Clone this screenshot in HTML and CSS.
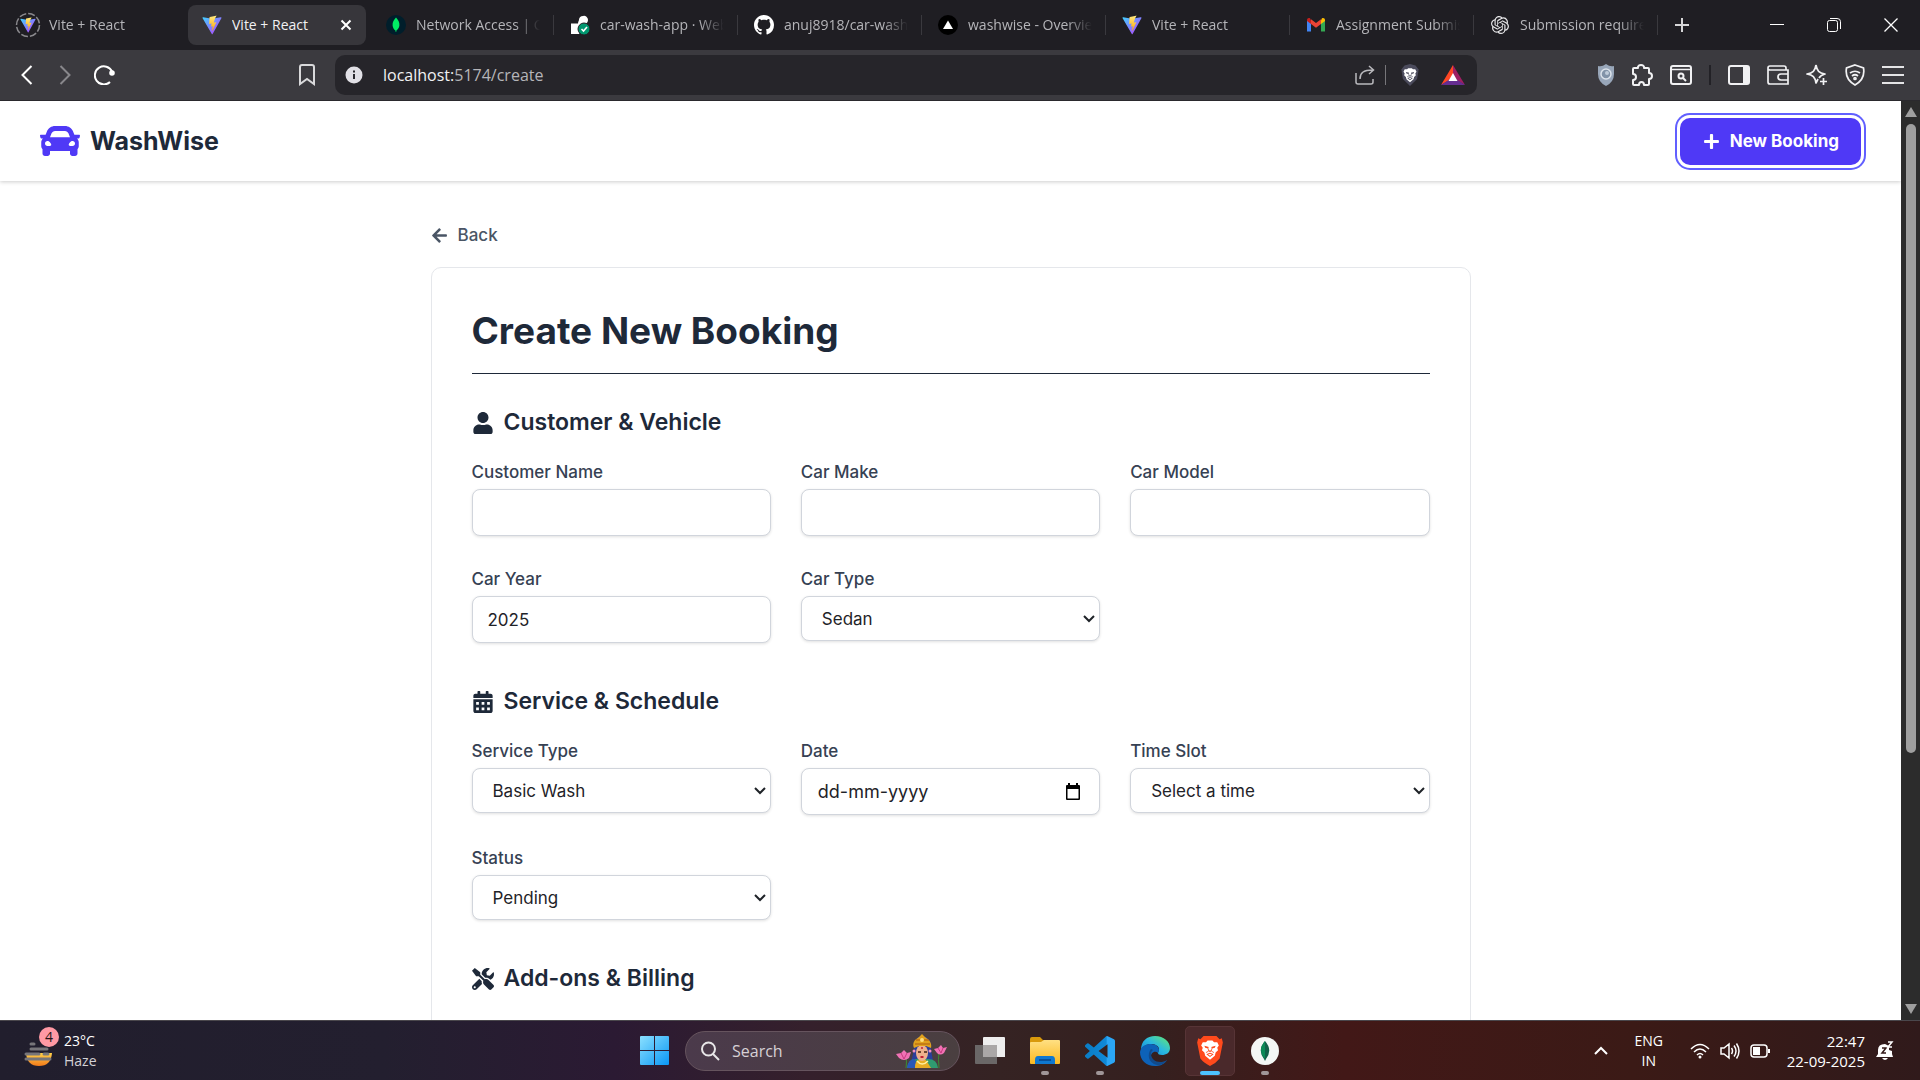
FILE: index.html
```html
<!DOCTYPE html>
<html lang="en">
<head>
<meta charset="utf-8">
<title>Vite + React</title>
<link rel="stylesheet" href="styles.css">
</head>
<body>
<svg class="defs" aria-hidden="true">
  <defs>
    <linearGradient id="vite-a" x1="0" y1="0" x2="1" y2="1"><stop offset="0" stop-color="#41d1ff"/><stop offset="1" stop-color="#bd34fe"/></linearGradient>
    <linearGradient id="vite-b" x1="0" y1="0" x2="0" y2="1"><stop offset="0" stop-color="#ffea83"/><stop offset="1" stop-color="#ffa800"/></linearGradient>
    <linearGradient id="win" x1="0" y1="0" x2="1" y2="1"><stop offset="0" stop-color="#8be0ff"/><stop offset="1" stop-color="#0a97f5"/></linearGradient>
    <linearGradient id="folder" x1="0" y1="0" x2="0" y2="1"><stop offset="0" stop-color="#ffe083"/><stop offset="1" stop-color="#fbb921"/></linearGradient>
    <linearGradient id="edge-a" x1="0" y1="1" x2="1" y2="0"><stop offset="0" stop-color="#1184d8"/><stop offset=".5" stop-color="#2ab8e0"/><stop offset="1" stop-color="#66eb6e"/></linearGradient>
    <linearGradient id="code" x1="0" y1="0" x2="1" y2="0"><stop offset="0" stop-color="#0a7cc4"/><stop offset=".7" stop-color="#1089d8"/><stop offset=".75" stop-color="#2ba6f5"/><stop offset="1" stop-color="#2ba6f5"/></linearGradient>
    <linearGradient id="sun" x1="0" y1="0" x2="0" y2="1"><stop offset="0" stop-color="#ffd24a"/><stop offset="1" stop-color="#f27a1a"/></linearGradient>
    <symbol id="vite" viewBox="0 0 32 32">
      <path fill="url(#vite-a)" d="M31 5 17 30.500c-.3.500-1 .500-1.300 0L1 5c-.4-.7.200-1.400.9-1.300L16 6l14-2.300c.8-.1 1.400.6 1 1.300z"/>
      <path fill="url(#vite-b)" d="m22.500 1-10 2c-.2 0-.4.200-.4.400l-.7 10.500c0 .3.300.500.500.4l2.900-.7c.3-.1.500.200.500.500L14.500 18c-.1.300.2.500.5.500l1.700-.6c.300-.1.600.2.500.5l-1.300 6.500c-.1.400.4.600.7.3L22.800 12c.2-.3-.1-.6-.4-.500l-3 .500c-.3.100-.5-.2-.4-.500L21 5l2-3.600c0-.3-.2-.5-.5-.4z"/>
    </symbol>
    <symbol id="lion" viewBox="0 0 24 28">
      <path d="m3 5 4 0 2-2h6l2 2h4l2 4-2 3 1 3-3 3-1 4-6 5-6-5-1-4-3-3 1-3-2-3z"/>
      <path class="lion-mark" d="m5 9.500 5.500 1.500-1 2-3.500-1zM19 9.500 13.500 11l1 2 3.500-1zM10 15.500h4l-2 2.500zM7.500 20l3.500-1.500h2l3.500 1.500-4.500 3.500z"/>
      <path class="lion-line" d="M9.500 12.500 10.500 16 7 18M14.500 12.500 13.500 16l3.500 2"/>
      <path d="m9.500 20.500 2.500-1 2.500 1-2.500 1.500z"/>
    </symbol>
  </defs>
</svg>

<header class="tabs">
  <a class="tab tab-first" href="#"><svg class="fav fav-ring" viewBox="0 0 26 26"><circle cx="13" cy="13" r="11.500" fill="none" stroke="#8a898d" stroke-width="1.500" stroke-dasharray="7 2"/><use href="#vite" x="5" y="5" width="16" height="16"/></svg><span class="tab-text">Vite + React</span></a>
  <a class="tab tab-active" href="#"><svg class="fav"><use href="#vite"/></svg><span class="tab-text">Vite + React</span><svg class="tab-close" viewBox="0 0 12 12"><path d="m1.500 1.500 9 9m0-9-9 9" stroke="#fff" stroke-width="2"/></svg></a>
  <a class="tab tab-sep" href="#"><svg class="fav" viewBox="0 0 20 20"><circle cx="10" cy="10" r="10" fill="#001e2b"/><path d="M10 2.500c2 2.200 3.700 4.700 3.400 7.800-.2 2.400-1.400 4-3 5.300L10.200 17h-.5l-.2-1.400c-1.500-1.300-2.700-2.900-2.900-5.200C6.300 7.200 8 4.700 10 2.500z" fill="#00ed64"/></svg><span class="tab-text">Network Access | Cloud</span></a>
  <a class="tab tab-sep" href="#"><svg class="fav" viewBox="0 0 20 20"><path d="M1 19V8.500h7c0-2 1-2.500 1-4A4 4 0 0 1 13 1a4 4 0 0 1 5 4c0 3-3 4-4 5L9 19z" fill="#fff"/><circle cx="14" cy="14" r="6" fill="#00966f" stroke="#1f1e23"/><path d="m11.500 14 2 2 3.500-4" fill="none" stroke="#fff" stroke-width="1.600"/></svg><span class="tab-text">car-wash-app · Web Service</span></a>
  <a class="tab tab-sep" href="#"><svg class="fav" viewBox="0 0 16 16"><path fill="#fff" d="M8 0C3.580 0 0 3.580 0 8c0 3.540 2.290 6.530 5.470 7.590.4.070.55-.17.55-.38 0-.19-.01-.82-.01-1.490-2.010.37-2.530-.49-2.690-.94-.09-.23-.48-.94-.82-1.130-.28-.15-.68-.52-.01-.53.63-.01 1.080.58 1.230.82.72 1.210 1.870.87 2.330.66.07-.52.28-.87.51-1.070-1.780-.2-3.640-.89-3.640-3.950 0-.87.31-1.590.82-2.150-.08-.2-.36-1.020.08-2.120 0 0 .67-.21 2.200.82.64-.18 1.320-.27 2-.27s1.360.09 2 .27c1.530-1.040 2.200-.82 2.200-.82.44 1.100.16 1.920.08 2.120.51.56.82 1.270.82 2.150 0 3.070-1.870 3.750-3.650 3.950.29.25.54.73.54 1.480 0 1.070-.01 1.930-.01 2.200 0 .21.15.46.55.38A8.010 8.010 0 0 0 16 8c0-4.420-3.580-8-8-8z"/></svg><span class="tab-text">anuj8918/car-wash-app</span></a>
  <a class="tab tab-sep" href="#"><svg class="fav" viewBox="0 0 20 20"><circle cx="10" cy="10" r="10"/><path d="m10 5.500 5 8.500H5z" fill="#fff"/></svg><span class="tab-text">washwise - Overview</span></a>
  <a class="tab tab-sep" href="#"><svg class="fav"><use href="#vite"/></svg><span class="tab-text">Vite + React</span></a>
  <a class="tab tab-sep" href="#"><svg class="fav" viewBox="0 0 20 20"><path d="M1 5v11.500h4V8z" fill="#4285f4"/><path d="M19 5v11.500h-4V8z" fill="#34a853"/><path d="M15 5.500V9l4-3V5c0-2-2-2.500-3.200-1.600z" fill="#fbbc04"/><path d="M5 5.500V9L1 6V5c0-2 2-2.500 3.200-1.600z" fill="#c5221f"/><path d="M5 4.200 10 8l5-3.800V9l-5 3.800L5 9z" fill="#ea4335"/></svg><span class="tab-text">Assignment Submission</span></a>
  <a class="tab tab-sep" href="#"><svg class="fav fav-small" viewBox="0 0 24 24"><path fill="#e6e6e8" d="M22.282 9.821a5.985 5.985 0 0 0-.516-4.911 6.046 6.046 0 0 0-6.510-2.900A6.065 6.065 0 0 0 4.981 4.182a5.985 5.985 0 0 0-3.998 2.900 6.046 6.046 0 0 0 .743 7.097 5.980 5.980 0 0 0 .511 4.911 6.051 6.051 0 0 0 6.515 2.900A5.985 5.985 0 0 0 13.260 24a6.056 6.056 0 0 0 5.772-4.206 5.990 5.990 0 0 0 3.998-2.900 6.056 6.056 0 0 0-.748-7.073zM13.260 22.430a4.476 4.476 0 0 1-2.876-1.040l.141-.081 4.779-2.758a.795.795 0 0 0 .393-.681v-6.737l2.020 1.169a.071.071 0 0 1 .038.052v5.583a4.504 4.504 0 0 1-4.495 4.493zM3.600 18.304a4.471 4.471 0 0 1-.535-3.014l.142.085 4.783 2.759a.771.771 0 0 0 .781 0l5.843-3.369v2.333a.080.080 0 0 1-.033.062L9.740 19.950a4.500 4.500 0 0 1-6.140-1.646zM2.341 7.896a4.485 4.485 0 0 1 2.366-1.973V11.600a.766.766 0 0 0 .388.677l5.815 3.355-2.020 1.168a.076.076 0 0 1-.071 0l-4.830-2.786A4.504 4.504 0 0 1 2.341 7.872zm16.596 3.856-5.833-3.388L15.119 7.200a.076.076 0 0 1 .071 0l4.830 2.791a4.494 4.494 0 0 1-.676 8.105v-5.678a.790.790 0 0 0-.407-.667zm2.011-3.023-.142-.085-4.774-2.782a.776.776 0 0 0-.785 0L9.409 9.230V6.897a.066.066 0 0 1 .028-.061l4.830-2.787a4.499 4.499 0 0 1 6.681 4.660zM8.307 12.863l-2.020-1.164a.080.080 0 0 1-.038-.057V6.075a4.499 4.499 0 0 1 7.375-3.454l-.142.081L8.704 5.460a.795.795 0 0 0-.393.681zm1.097-2.365 2.602-1.500 2.607 1.500v2.999l-2.597 1.500-2.607-1.500z"/></svg><span class="tab-text">Submission requirements</span></a>
  <button class="bare new-tab" aria-label="New tab"><svg width="16" height="16" viewBox="0 0 16 16"><path d="M8 1v14M1 8h14" stroke="#d6d6d8" stroke-width="2"/></svg></button>
  <div class="window-controls">
    <button class="bare" aria-label="Minimize"><svg width="14" height="14"><path d="M0 6.500h14" stroke="#fff"/></svg></button>
    <button class="bare" aria-label="Restore"><svg width="14" height="14" fill="none" stroke="#fff"><rect x=".5" y="2.500" width="10" height="11" rx="2"/><path d="M3 .5h7q3.500 0 3.500 3V11"/></svg></button>
    <button class="bare" aria-label="Close"><svg width="14" height="14"><path d="m.5.500 13 13m0-13-13 13" stroke="#fff" stroke-width="1.300"/></svg></button>
  </div>
</header>

<nav class="toolbar" aria-label="Browser">
  <div class="nav-buttons">
    <button class="bare" aria-label="Back"><svg width="18" height="20" fill="none" stroke="#fff" stroke-width="2"><path d="m13.500 1-9 9 9 9"/></svg></button>
    <button class="bare" aria-label="Forward"><svg width="18" height="20" fill="none" stroke="#88878b" stroke-width="2"><path d="m4.500 1 9 9-9 9"/></svg></button>
    <button class="bare" aria-label="Reload"><svg width="22" height="20" fill="none" stroke="#fff" stroke-width="2"><path d="M16 17A9 9 0 1 1 18 6.500"/><circle cx="18" cy="8" r="1.800" fill="#fff"/></svg></button>
  </div>
  <button class="bare bookmark" aria-label="Bookmark"><svg width="16" height="22" fill="none" stroke="#d9d9db" stroke-width="2"><path d="M1 3q0-2 2-2h10q2 0 2 2v17l-7-5-7 5z"/></svg></button>
  <div class="address">
    <svg width="18" height="18"><circle cx="9" cy="9" r="8.500" fill="#e1e0e6"/><path d="M8 8h2v5H8zM8 4.500h2v2H8z" fill="#29282d"/></svg>
    <span class="url">localhost:<span class="path">5174/create</span></span>
    <svg width="20" height="20" fill="none" stroke="#b9b9bd" stroke-width="1.500"><path d="M1 8v9q0 2 2 2h13q2 0 2-2v-3M5 14c0-6 3-9 13-9M14 1l4.500 4L14 9"/></svg>
    <span class="bar bar-light"></span>
    <svg class="lion lion-small" width="20" height="22" viewBox="0 0 24 28"><path class="lion-bg" d="M5 2 12 0l7 2 4 5-2 12-9 9-9-9L1 7z"/><use href="#lion" x="3" y="3" width="18" height="21"/></svg>
    <svg width="24" height="20"><path d="M12 0 0 20l12-7z" fill="#ff4724"/><path d="m12 0 12 20-12-7z" fill="#9e1f63"/><path d="M0 20h24l-12-8z" fill="#662d91"/><path d="m12 8 4.500 8h-9z" fill="#fff"/></svg>
  </div>
  <div class="extensions">
    <svg width="16" height="22"><path d="M8 0q4 3 8 2v8q0 8-8 12-8-4-8-12V2q4 1 8-2z" fill="#98a6b9"/><circle cx="8" cy="10" r="5" fill="#8293a8" stroke="#dce3eb" stroke-width="1.500"/><circle cx="9" cy="9" r="2" fill="#bfcbd9"/></svg>
    <svg width="22" height="22" fill="none" stroke="#f1f1f3" stroke-width="2" stroke-linejoin="round"><path d="M2 5q0-1 1-1h4c-1-4 7-4 6 0h4q1 0 1 1v4c4 0 4 6 0 6v5q0 1-1 1h-4c0-4-5-4-5 0H3q-1 0-1-1v-4c4 0 4-6 0-6z"/></svg>
    <svg width="22" height="20" fill="none" stroke="#f1f1f3" stroke-width="2"><rect x="1" y="1" width="20" height="18" rx="2"/><path d="M1 4.500h20" stroke-width="1.500"/><circle cx="11" cy="11" r="2.500"/><path d="m13 13 3 3"/></svg>
    <span class="bar"></span>
    <svg width="22" height="20"><rect x="1" y="1" width="20" height="18" rx="2" fill="none" stroke="#f1f1f3" stroke-width="2"/><path d="M15 1h6v18h-6z" fill="#f1f1f3"/></svg>
    <svg width="22" height="20" fill="none" stroke="#f1f1f3" stroke-width="2"><path d="M3 1h14q2 0 2 2v2h2v14H3q-2 0-2-2V3q0-2 2-2zM1 4q1 1 2 1h16M21 9h-7q-3 0-3 3t3 3h7" stroke-width="1.700"/></svg>
    <svg width="22" height="22" fill="none" stroke="#f1f1f3" stroke-width="1.700" stroke-linejoin="round"><path d="M10 1c1 6 3 8 9 9-4 1-5 2-6 4M10 1c-1 6-3 8-9 9 6 1 8 3 9 9l2-4M17.500 14v7M14 17.500h7"/></svg>
    <svg width="20" height="22" fill="none" stroke="#f1f1f3" stroke-width="1.700"><path d="m10 1 8.500 3q2 11-8.500 17Q-.5 15 1.500 4zM5 9q5-3.500 10 0M7 12q3-2.500 6 0"/><circle cx="10" cy="14.500" r="1"/></svg>
    <svg width="22" height="18"><path d="M0 1h22M0 9h22M0 17h22" stroke="#e4e4e6" stroke-width="2"/></svg>
  </div>
</nav>

<div class="viewport">
  <div class="page">
    <header class="site-header">
      <a class="brand" href="#"><svg class="brand-icon" viewBox="0 0 512 512"><path d="M499.990 176h-59.870l-16.640-41.600C406.380 91.630 365.570 64 319.500 64h-127c-46.060 0-86.880 27.630-103.990 70.400L71.870 176H12.010C4.200 176-1.530 183.340.37 190.910l6 24C7.700 220.250 12.500 224 18.010 224h20.070C24.650 235.730 16 252.780 16 272v48c0 16.120 6.160 30.670 16 41.930V416c0 17.670 14.330 32 32 32h32c17.670 0 32-14.330 32-32v-32h256v32c0 17.670 14.330 32 32 32h32c17.670 0 32-14.330 32-32v-54.070c9.840-11.250 16-25.800 16-41.930v-48c0-19.220-8.650-36.270-22.070-48H494c5.510 0 10.310-3.750 11.640-9.090l6-24c1.890-7.570-3.840-14.910-11.650-14.910zm-352.060-17.830c7.290-18.220 24.940-30.170 44.570-30.170h127c19.630 0 37.280 11.950 44.570 30.170L384 208H128l19.930-49.830zM96 319.800c-19.200 0-32-12.760-32-31.900S76.800 256 96 256s48 28.710 48 47.850-28.800 15.950-48 15.950zm320 0c-19.200 0-48 3.190-48-15.950S396.800 256 416 256s32 12.760 32 31.900-12.800 31.900-32 31.900z"/></svg>WashWise</a>
      <button class="primary"><svg class="icon-sm" viewBox="0 0 448 512"><path d="M416 208H272V64c0-17.670-14.330-32-32-32h-32c-17.670 0-32 14.330-32 32v144H32c-17.670 0-32 14.330-32 32v32c0 17.670 14.330 32 32 32h144v144c0 17.670 14.330 32 32 32h32c17.670 0 32-14.330 32-32V304h144c17.670 0 32-14.330 32-32v-32c0-17.670-14.330-32-32-32z"/></svg>New Booking</button>
    </header>
    <main class="content">
      <a class="back" href="#"><svg class="icon-sm" viewBox="0 0 448 512"><path d="M257.500 445.100l-22.200 22.200c-9.400 9.400-24.600 9.400-33.900 0L7 273c-9.400-9.400-9.400-24.600 0-33.900L201.400 44.700c9.400-9.400 24.600-9.400 33.900 0l22.200 22.200c9.500 9.500 9.300 25-.4 34.300L136.600 216H424c13.300 0 24 10.700 24 24v32c0 13.300-10.700 24-24 24H136.600l120.500 114.800c9.800 9.300 10 24.800.4 34.300z"/></svg>Back</a>
      <form class="card">
        <h1 class="title">Create New Booking</h1>
        <section class="group">
          <h2 class="heading"><svg class="icon-md" viewBox="0 0 448 512"><path d="M224 256c70.700 0 128-57.300 128-128S294.700 0 224 0 96 57.300 96 128s57.300 128 128 128zm89.600 32h-16.700c-22.200 10.200-46.900 16-72.900 16s-50.600-5.800-72.900-16h-16.700C60.200 288 0 348.200 0 422.400V464c0 26.500 21.500 48 48 48h352c26.500 0 48-21.500 48-48v-41.600c0-74.200-60.200-134.400-134.400-134.400z"/></svg>Customer &amp; Vehicle</h2>
          <div class="fields">
            <div class="field"><label for="name">Customer Name</label><input class="control" id="name" type="text"></div>
            <div class="field"><label for="make">Car Make</label><input class="control" id="make" type="text"></div>
            <div class="field"><label for="model">Car Model</label><input class="control" id="model" type="text"></div>
            <div class="field"><label for="year">Car Year</label><input class="control" id="year" type="text" inputmode="numeric" value="2025"></div>
            <div class="field"><label for="type">Car Type</label><select class="control select" id="type"><option>Sedan</option></select></div>
          </div>
        </section>
        <section class="group">
          <h2 class="heading"><svg class="icon-md" viewBox="0 0 448 512"><path fill-rule="evenodd" d="M0 464c0 26.500 21.500 48 48 48h352c26.500 0 48-21.500 48-48V192H0zM64 256h64v64H64zm128 0h64v64h-64zm128 0h64v64h-64zM64 384h64v64H64zm128 0h64v64h-64zm128 0h64v64h-64zM400 64h-48V16c0-8.800-7.200-16-16-16h-32c-8.800 0-16 7.200-16 16v48H160V16c0-8.800-7.200-16-16-16h-32c-8.800 0-16 7.200-16 16v48H48C21.500 64 0 85.500 0 112v48h448v-48c0-26.500-21.500-48-48-48z"/></svg>Service &amp; Schedule</h2>
          <div class="fields">
            <div class="field"><label for="service">Service Type</label><select class="control select" id="service"><option>Basic Wash</option></select></div>
            <div class="field"><label for="date">Date</label><div class="control date"><input class="date-input" id="date" type="text" value="dd-mm-yyyy"><button class="bare" type="button" aria-label="Open calendar"><svg width="16" height="18"><path fill="#000" fill-rule="evenodd" d="M3 0h2v2h6V0h2v2h1q1 0 1 1v13q0 1-1 1H2q-1 0-1-1V3q0-1 1-1h1zM2.500 6v9.500h11V6z"/></svg></button></div></div>
            <div class="field"><label for="slot">Time Slot</label><select class="control select" id="slot"><option>Select a time</option></select></div>
            <div class="field"><label for="status">Status</label><select class="control select" id="status"><option>Pending</option></select></div>
          </div>
        </section>
        <section class="group">
          <h2 class="heading"><svg class="icon-md" viewBox="0 0 512 512"><path d="M501.100 395.700L384 278.600c-23.100-23.100-57.600-27.600-85.400-13.900L192 158.100V96L64 0 0 64l96 128h62.100l106.600 106.600c-13.600 27.800-9.200 62.300 13.900 85.400l117.100 117.100c14.600 14.600 38.200 14.600 52.700 0l52.700-52.700c14.500-14.600 14.500-38.200 0-52.700zM331.700 225c28.300 0 54.900 11 74.900 31l19.400 19.400c15.800-6.900 30.800-16.500 43.800-29.500 37.100-37.100 49.700-89.300 37.900-136.700-2.200-9-13.500-12.100-20.100-5.500l-74.400 74.400-67.900-11.300L334 98.900l74.400-74.400c6.600-6.600 3.400-17.900-5.700-20.200-47.400-11.700-99.600.9-136.600 37.900-28.500 28.500-41.900 66.100-41.200 103.600l82.100 82.100c8.100-1.900 16.500-2.900 24.700-2.900zm-103.900 82l-56.700-56.700L18.700 402.800c-25 25-25 65.500 0 90.500s65.500 25 90.500 0l123.600-123.600c-7.600-19.900-9.900-41.600-5-62.700zM64 472c-13.200 0-24-10.800-24-24 0-13.300 10.700-24 24-24s24 10.700 24 24c0 13.200-10.700 24-24 24z"/></svg>Add-ons &amp; Billing</h2>
        </section>
      </form>
    </main>
  </div>
  <div class="scrollbar">
    <svg width="12" height="10"><path d="m6 0 6 10H0z"/></svg>
    <div class="track"><div class="thumb"></div></div>
    <svg width="12" height="10"><path d="m6 10 6-10H0z"/></svg>
  </div>
</div>

<footer class="taskbar">
  <div class="weather">
    <div class="weather-icon">
      <svg width="30" height="26"><path d="M2 12h26q-1 13-13 13T2 12z" fill="url(#sun)"/><path d="M7 3h3M7 8h16M2 13h13M20 13h4M2 18h24" stroke="#77757a" stroke-width="3" stroke-linecap="round"/></svg>
      <span class="badge">4</span>
    </div>
    <div class="weather-text"><span>23°C</span><span class="dim">Haze</span></div>
  </div>
  <div class="apps">
    <button class="bare app" aria-label="Start"><svg width="30" height="30"><path fill="url(#win)" d="M0 1q0-1 1-1h13v14H0zM15 0h13q1 0 1 1v13H15zM0 15h14v14H1q-1 0-1-1zM15 15h14v13q0 1-1 1H15z"/></svg></button>
    <label class="search">
      <svg width="20" height="20" fill="none" stroke="#e8e6e8" stroke-width="2"><circle cx="8.500" cy="8" r="6.500"/><path d="m13 13 6 6"/></svg>
      <input class="search-input" type="text" placeholder="Search">
      <svg width="52" height="34" viewBox="0 0 52 34">
        <path d="M10 22q1 6 0 12M43 17q-1 8 0 17" fill="none" stroke="#3d8c32"/>
        <path d="m0 20 5-1 3-3 3 3 4-1-2 6q-5 4-10 0zM38 15l4-1 3-3 2 3 4-1-3 6q-4 3-7 0z" fill="#f172b5"/>
        <path d="m5 19 3 6 3-6M42 14l3 5 2-5" fill="none" stroke="#c9387f"/>
        <path d="M18 16q-1-13 8-14 10 1 9 14l3 16H14z" fill="#2b3f9a"/>
        <path d="M11 34q1-9 9-9h12q9 0 10 9z" fill="#2f9a70"/><path d="M11 34q1-9 8-9l3 9z" fill="#2858b8"/><path d="M19 34q0-8 4-8h7l5 8z" fill="#e8ad25"/>
        <ellipse cx="26" cy="19" rx="6" ry="8" fill="#eeb18c"/>
        <path d="M18 14q-2-4 1-8l4-3 3-3 3 3 4 3q3 4 2 8l-5-2h-7z" fill="#e0a11d"/><path d="M20 6h13M19 10h15" stroke="#ad5a10"/><circle cx="26" cy="6" r="2" fill="#ffe07a"/>
        <path d="M22 18h3m3 0h3" stroke="#452316" stroke-width="1.500"/><path d="M24.500 23h3" stroke="#c21f35" stroke-width="2"/><circle cx="26" cy="14" r="1" fill="#c21f35"/>
        <circle cx="18" cy="17" r="1.500" fill="#f291c2"/><circle cx="34" cy="17" r="1.500" fill="#f291c2"/>
        <path d="M21 27q5 6 11 0" fill="none" stroke="#fff0a0" stroke-width="1.500"/>
      </svg>
    </label>
    <button class="bare app" aria-label="Task view"><svg width="30" height="28"><path d="M8 1q0-1 1-1h20q1 0 1 1v19H8z" fill="#eee"/><path d="M0 8h22v19H1q-1 0-1-1z" fill="#6a6767"/><path d="M8 8h14v12H8z" fill="#aaa7a7"/></svg></button>
    <button class="bare app open" aria-label="File Explorer"><svg width="30" height="28"><path d="M0 2q0-2 2-2h8l3 3h14v6H0z" fill="#d99a0c"/><path d="M0 6q0-1 1-1h10l3-2h15q1 0 1 1v22q0 1-1 1H1q-1 0-1-1z" fill="url(#folder)"/><path d="M5 27v-4q0-4 3-4h14q3 0 3 4v4z" fill="#0f78d0"/><path d="M9 23h12" stroke="#07519b" stroke-width="2"/></svg></button>
    <button class="bare app open" aria-label="Visual Studio Code"><svg width="30" height="30" viewBox="0 0 24 24"><path fill="url(#code)" d="M23.150 2.587L18.210.21a1.494 1.494 0 0 0-1.705.29l-9.460 8.630-4.120-3.128a.999.999 0 0 0-1.276.057L.327 7.261A1 1 0 0 0 .326 8.740L3.899 12 .326 15.260a1 1 0 0 0 .001 1.479L1.650 17.940a.999.999 0 0 0 1.276.057l4.120-3.128 9.460 8.630a1.492 1.492 0 0 0 1.704.29l4.942-2.377A1.500 1.500 0 0 0 24 20.060V3.939a1.500 1.500 0 0 0-.85-1.352zm-5.146 14.861L10.826 12l7.178-5.448v10.896z"/></svg></button>
    <button class="bare app" aria-label="Edge"><svg width="30" height="30"><path d="M1 14C1 5 7 0 15 0c9 0 15 6 15 12 0 5-4 7-8 7-3 0-4-1-4-2s1-2 1-4c0-3-4-5-8-5S3 10 1 14z" fill="url(#edge-a)"/><path d="M0 16C1 10 6 8 11 8c5 0 8 3 8 6 0 1-1 2-1 3-3-3-8 0-7 5 1 4 6 6 10 5 2 0 4-1 6-3-3 5-8 6-12 6C6 30 0 24 0 16z" fill="#0d62b8"/><path d="M11 13c-4 5-3 14 6 16 5 0 8-2 10-5-8 5-16 0-16-6 0-3 2-4 2-4z" fill="#114a8b"/></svg></button>
    <button class="bare app open active" aria-label="Brave"><svg class="lion" width="26" height="30" viewBox="0 0 24 28"><path class="lion-bg" d="M6 0h12l3 3 2-1 1 4-3 15q-3 4-9 7-6-3-9-7L0 6l1-4 2 1z"/><use href="#lion" x="3" y="2" width="18" height="21"/></svg></button>
    <button class="bare app open" aria-label="MongoDB Compass"><svg width="28" height="28"><circle cx="14" cy="14" r="14" fill="#f4f7f5"/><path d="M14 4q8 9 1 18l-1 2-1-2Q6 13 14 4z" fill="#116149"/><path d="M14 4q-8 9 0 18z" fill="#0b8a57"/></svg></button>
  </div>
  <div class="tray">
    <svg width="14" height="9" fill="none" stroke="#fff" stroke-width="2"><path d="m1 8 6-6 6 6"/></svg>
    <div class="lang"><span>ENG</span><span>IN</span></div>
    <div class="status-icons">
      <svg width="20" height="16" fill="none" stroke="#fff" stroke-width="1.500"><path d="M1 6q9-9 18 0M4 9q6-6 12 0M7 12q3-3 6 0"/><circle cx="10" cy="14" r="1.500" fill="#fff" stroke="none"/></svg>
      <svg width="20" height="18" fill="none" stroke="#fff" stroke-width="1.500"><path d="M1 6h3l5-4v14l-5-4H1zM11.500 6q2 3 0 6M14 3.500q4 5.500 0 11M16.500 1.500q5 7.500 0 15"/></svg>
      <svg width="20" height="14"><rect x="1" y="1" width="16" height="12" rx="3" fill="none" stroke="#fff" stroke-width="1.500"/><path d="M3 3h7v8H3zM18 5h2v4h-2z" fill="#fff"/></svg>
    </div>
    <div class="clock"><span>22:47</span><span>22-09-2025</span></div>
    <svg width="18" height="20"><path d="M0 16 2 13V9q0-6 7-6l4 2v4l3 1v3l1 3zM6 17h6q-3 4-6 0z" fill="#fff"/><path d="M6 7h4l-4 5h4" fill="none" stroke="#341a19" stroke-width="1.500"/><path d="M12 1h4l-4 5h4" fill="none" stroke="#fff" stroke-width="1.500"/></svg>
  </div>
</footer>
</body>
</html>
```
FILE: styles.css
```css
*, *::before, *::after { box-sizing: border-box; }

body {
  margin: 0;
  height: 100vh;
  display: flex;
  flex-direction: column;
  overflow: hidden;
  font-family: "Open Sans", "Noto Sans", sans-serif;
  font-size: 14px;
  color: #fff;
}

svg { display: block; flex: none; }
a { color: inherit; text-decoration: none; }
input, select, button { font: inherit; color: inherit; }
.bare { border: 0; padding: 0; background: none; display: flex; align-items: center; justify-content: center; }
.defs { position: absolute; width: 0; height: 0; }

/* Tab strip */
.tabs { display: flex; align-items: center; height: 50px; flex: none; padding-left: 2px; background: #1f1e23; color: #b5b5b9; }
.tab { display: flex; align-items: center; gap: 10px; flex: 0 1 184px; min-width: 0; height: 40px; padding: 0 14px 0 16px; line-height: 18px; }
.tab-first { gap: 8px; padding-left: 13px; }
.tab-active { flex-basis: 178px; margin: 0 4px 0 2px; padding: 0 14px; border-radius: 8px; background: #37363b; color: #f1f1f3; }
.tab-sep { background: linear-gradient(#3a393e, #3a393e) right center / 1px 20px no-repeat; }
.fav { width: 20px; height: 20px; }
.fav-small { width: 18px; height: 18px; margin: 0 1px; }
.fav-ring { width: 26px; height: 26px; }
.tab-text { flex: 1; min-width: 0; overflow: hidden; white-space: nowrap; -webkit-mask-image: linear-gradient(90deg, #000 80%, transparent); mask-image: linear-gradient(90deg, #000 80%, transparent); }
.tab-active .tab-text { -webkit-mask-image: none; mask-image: none; }
.tab-close { width: 12px; height: 12px; }
.new-tab { width: 48px; }
.window-controls { display: flex; gap: 43px; margin-left: auto; padding-right: 22px; }

/* Toolbar */
.toolbar { display: flex; align-items: center; height: 51px; flex: none; padding: 0 16px 0 18px; border-bottom: 1px solid #2a292d; background: #3b3a3f; }
.nav-buttons { display: flex; gap: 20px; }
.bookmark { margin-left: auto; }
.address { display: flex; align-items: center; flex: 0 1 1142px; height: 40px; margin-left: 20px; padding: 0 12px 0 10px; border-radius: 10px; background: #26252a; }
.url { flex: 1; margin-left: 20px; font-size: 16px; color: #f1f1f3; }
.path { color: #b5b5b9; }
.bar { width: 2px; height: 20px; background: #222126; }
.bar-light { width: 1px; margin: 0 14px 0 10px; background: #77767a; }
.lion-small { margin-right: 21px; }
.lion { --lion: #ff4a1c; fill: #fff; }
.lion-bg { fill: var(--lion); }
.lion-mark { fill: var(--lion); }
.lion-line { fill: none; stroke: var(--lion); stroke-width: 1px; }
.lion-small { --lion: #4b4b5c; }
.extensions { display: flex; align-items: center; gap: 17px; margin-left: 121px; }

/* Page viewport */
.viewport { display: flex; flex: 1; min-height: 0; background: #fff; }
.page { flex: 1; min-width: 0; overflow: hidden; font-family: Inter, "Liberation Sans", sans-serif; font-size: 17px; line-height: 25px; color: #1e2939; }
.site-header { display: flex; align-items: center; justify-content: space-between; height: 80px; padding: 0 40px; box-shadow: 0 1px 4px rgba(0, 0, 0, .2); }
.brand { display: flex; align-items: center; gap: 10px; font-size: 25px; font-weight: 700; }
.brand-icon { width: 40px; height: 40px; fill: #4f39f6; }
.primary { display: flex; align-items: center; gap: 10px; height: 47px; padding: 1px 22px 0 23px; border: 0; border-radius: 10px; background: #4f39f6; color: #fff; font-weight: 700; box-shadow: 0 0 0 3px #fff, 0 0 0 5px #615fff; }
.icon-sm { width: 17px; height: 17px; fill: currentColor; }
.content { max-width: 1040px; margin: 0 auto; padding-top: 41px; }
.back { display: flex; align-items: center; gap: 10px; width: max-content; margin-bottom: 18px; line-height: 27px; color: #4a5565; font-weight: 500; }
.card { padding: 40px; border: 1px solid #e5e7eb; border-radius: 10px; background: #fff; }
.title { margin: 0 0 30px; padding-bottom: 20px; border-bottom: 1px solid #1e2939; font-size: 37px; line-height: 45px; font-weight: 700; }
.group { margin-bottom: 40px; }
.heading { display: flex; align-items: center; gap: 10px; margin: 0 0 18px; font-size: 23px; line-height: 37px; font-weight: 600; }
.icon-md { width: 22px; height: 22px; fill: currentColor; }
.fields { display: grid; grid-template-columns: repeat(3, 1fr); gap: 30px; align-items: start; }
.field { display: flex; flex-direction: column; gap: 3px; min-width: 0; }
.field label { line-height: 27px; color: #364153; font-weight: 500; }
.control { width: 100%; height: 47px; padding: 0 15px; border: 1px solid #d1d5dc; border-radius: 8px; background: #fff; color: #1f2328; box-shadow: 0 1px 3px rgba(0, 0, 0, .12); }
.select { height: 45px; padding: 2px 20px 0; appearance: none; background: #fff url("data:image/svg+xml,%3Csvg xmlns='http://www.w3.org/2000/svg' width='12' height='8'%3E%3Cpath d='m1 1 5 5 5-5' fill='none' stroke='%231f2328' stroke-width='2'/%3E%3C/svg%3E") right 4px center no-repeat; }
.date { display: flex; align-items: center; padding-right: 18px; }
.date-input { flex: 1; min-width: 0; padding: 0 1px; border: 0; outline: 0; background: none; font-size: 18px; }

/* Scrollbar */
.scrollbar { display: flex; flex-direction: column; align-items: center; gap: 7px; width: 19px; padding: 6px 0; background: #2c2c2c; fill: #9f9f9f; }
.track { flex: 1; width: 10px; }
.thumb { height: 72%; border-radius: 5px; background: #9f9f9f; }

/* Taskbar */
.taskbar { display: grid; grid-template-columns: 1fr auto 1fr; align-items: center; height: 60px; flex: none; border-top: 1px solid #4a474c; background: linear-gradient(90deg, #211e2d 0%, #231f2f 20%, #2b1a33 32%, #35202c 42%, #352323 52%, #35201f 60%, #421817 70%, #3b1a16 85%, #301a1b 100%); line-height: 20px; }
.weather { display: flex; align-items: center; gap: 10px; padding-left: 24px; }
.weather-icon { position: relative; padding-top: 6px; }
.badge { position: absolute; top: -8px; right: -5px; width: 20px; height: 20px; border-radius: 50%; background: #ff99a4; color: #241416; text-align: center; }
.weather-text, .lang, .clock { display: flex; flex-direction: column; }
.dim { color: #d3d1d5; }
.apps { display: flex; align-items: center; gap: 5px; }
.app { position: relative; width: 50px; height: 50px; border-radius: 5px; }
.open::after { content: ""; position: absolute; bottom: 1px; left: 21px; width: 8px; height: 4px; border-radius: 2px; background: #a09698; }
.active { background: #4a292b; border: 1px solid #573436; }
.active::after { left: 14px; bottom: 0; width: 20px; background: #4cc2ff; }
.search { display: flex; align-items: center; gap: 12px; width: 275px; height: 40px; padding: 0 11px 0 14px; border: 1px solid #66545e; border-radius: 20px; background: linear-gradient(90deg, #4b3a4b, #4a3f40); }
.search-input { flex: 1; min-width: 0; padding: 0; border: 0; outline: 0; background: none; font-size: 16px; }
.search-input::placeholder { color: #d6d0d5; opacity: 1; }
.tray { display: flex; align-items: center; justify-content: flex-end; padding-right: 26px; }
.lang { width: 82px; text-align: center; }
.status-icons { display: flex; align-items: center; gap: 10px; margin-right: 17px; }
.clock { margin-right: 11px; font-size: 15px; text-align: right; }
```
